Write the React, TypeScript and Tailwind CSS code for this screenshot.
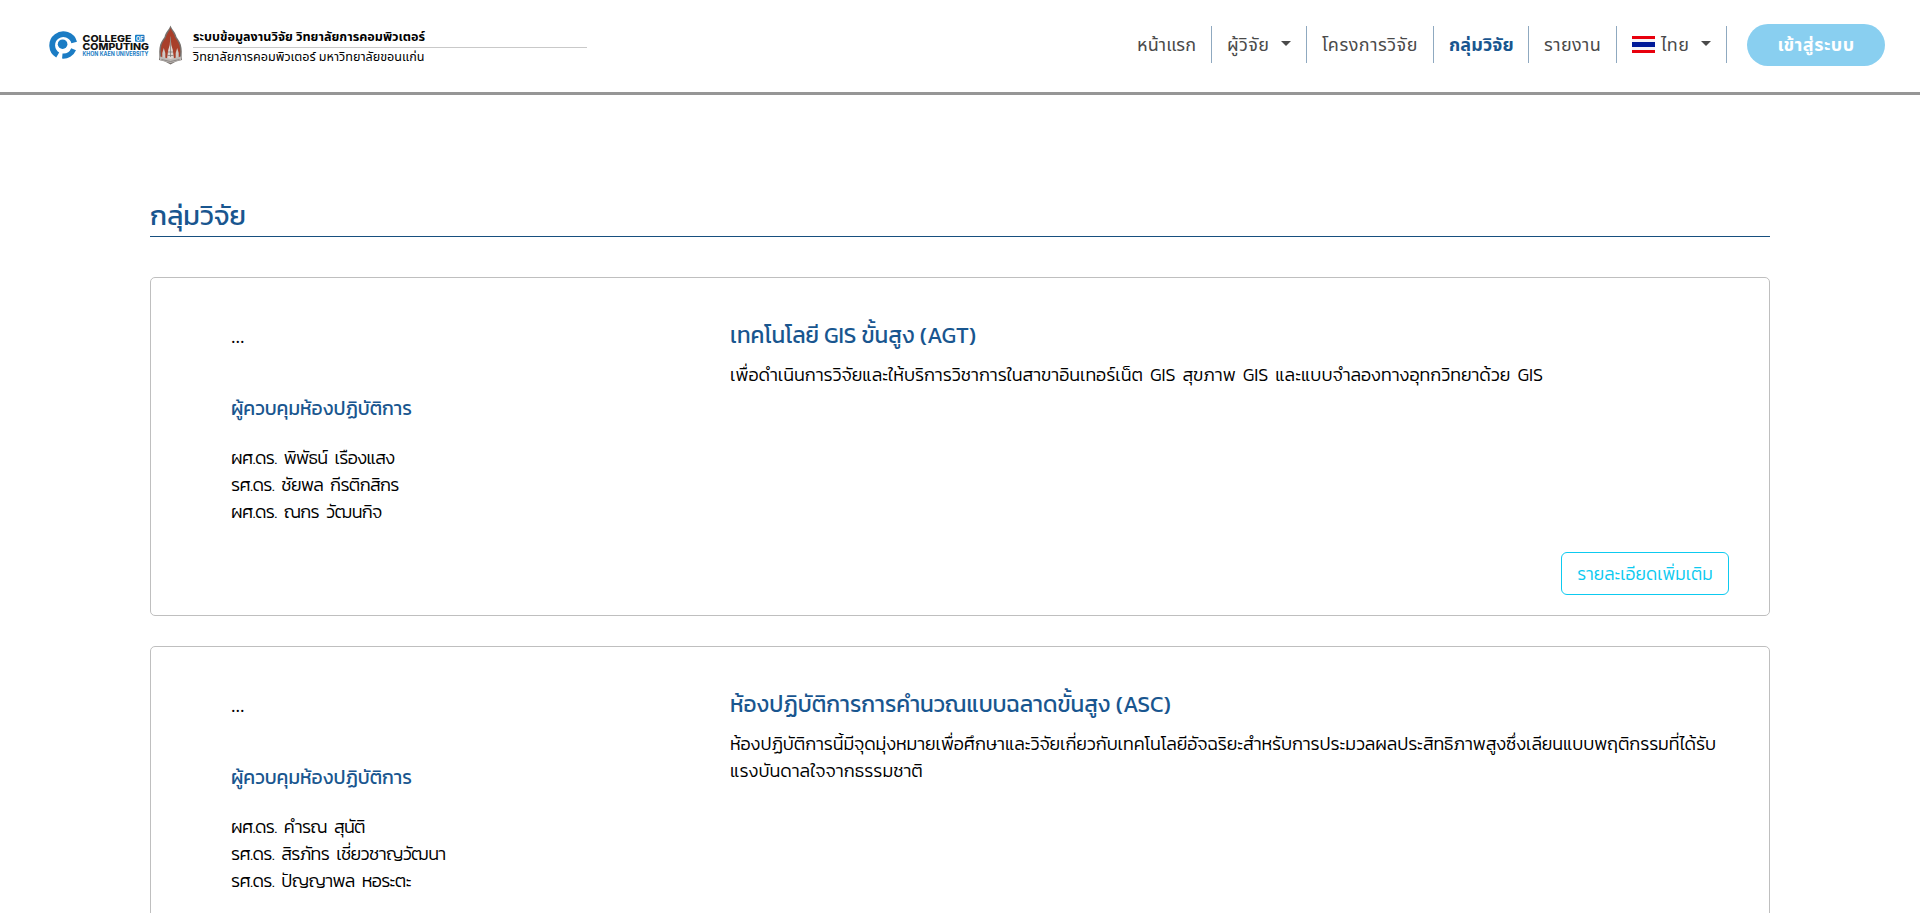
interface Group {
  title: string;
  lines: { text: string; cls: string }[];
  people: string[];
  action?: string;
}

const groups: Group[] = [
  {
    title: "เทคโนโลยี GIS ขั้นสูง (AGT)",
    lines: [{ text: "เพื่อดำเนินการวิจัยและให้บริการวิชาการในสาขาอินเทอร์เน็ต GIS สุขภาพ GIS และแบบจำลองทางอุทกวิทยาด้วย GIS", cls: "tracking-[-0.04px] [word-spacing:3px]" }],
    people: ["ผศ.ดร. พิพัธน์ เรืองแสง", "รศ.ดร. ชัยพล กีรติกสิกร", "ผศ.ดร. ณกร วัฒนกิจ"],
    action: "รายละเอียดเพิ่มเติม",
  },
  {
    title: "ห้องปฏิบัติการการคำนวณแบบฉลาดขั้นสูง (ASC)",
    lines: [
      { text: "ห้องปฏิบัติการนี้มีจุดมุ่งหมายเพื่อศึกษาและวิจัยเกี่ยวกับเทคโนโลยีอัจฉริยะสำหรับการประมวลผลประสิทธิภาพสูงซึ่งเลียนแบบพฤติกรรมที่ได้รับ", cls: "tracking-[-0.105px]" },
      { text: "แรงบันดาลใจจากธรรมชาติ", cls: "" },
    ],
    people: ["ผศ.ดร. คำรณ สุนัติ", "รศ.ดร. สิรภัทร เชี่ยวชาญวัฒนา", "รศ.ดร. ปัญญาพล หอระตะ"],
  },
];

function CollegeLogo() {
  return (
    <svg width="103" height="36" viewBox="0 0 103 36" className="-mr-px shrink-0">
      <path d="M26.200 12.400A11.200 11.200 0 1 0 9.700 25" fill="none" stroke="#1b7cc4" strokeWidth="5.800" />
      <path d="M14.300 26A11.200 11.200 0 0 0 25.600 19.200" fill="none" stroke="#1b7cc4" strokeWidth="5.200" />
      <circle cx="14.600" cy="14.200" r="4.800" fill="#1b7cc4" />
      <text x="34.500" y="11.500" textLength="49" lengthAdjust="spacingAndGlyphs" fontFamily="Inter, sans-serif" fontWeight="800" fontSize="9.200" fill="#111">COLLEGE</text>
      <rect x="87" y="4.800" width="9.500" height="7" rx="1" fill="#1b7cc4" />
      <text x="88" y="10.500" textLength="7.500" lengthAdjust="spacingAndGlyphs" fontFamily="Inter, sans-serif" fontWeight="700" fontSize="6" fill="#fff">OF</text>
      <text x="34.500" y="20" textLength="66.500" lengthAdjust="spacingAndGlyphs" fontFamily="Inter, sans-serif" fontWeight="800" fontSize="9.200" fill="#111">COMPUTING</text>
      <text x="34.500" y="26" textLength="66" lengthAdjust="spacingAndGlyphs" fontFamily="Inter, sans-serif" fontWeight="700" fontSize="5.500" fill="#1b7cc4">KHON KAEN UNIVERSITY</text>
    </svg>
  );
}

function Emblem() {
  return (
    <svg width="25" height="40" viewBox="0 0 25 40" className="shrink-0">
      <path d="M12.500 .5C14 5 17.500 7 18.500 12C20.500 15 23 18 23.500 23C24.300 28 23 31 24 35L18 36.500L12.500 39.500L7 36.500L1 35C2 31 .7 28 1.500 23C2 18 4.500 15 6.500 12C7.500 7 11 5 12.500 .5Z" fill="#77716d" />
      <path d="M12.500 3C13.800 6.500 16.500 9 17.400 13C19.700 16 21.800 19 22.100 24C22.600 28 21.500 30 22 33L3 33C3.500 30 2.400 28 2.900 24C3.200 19 5.300 16 7.600 13C8.500 9 11.200 6.500 12.500 3Z" fill="#a83f2a" />
      <path d="M12.500 11L13.300 20L14.800 25L16 34H9L10.200 25L11.700 20Z" fill="#ddd6d2" />
      <path d="M5.800 23L7.300 28V34H4.300V28ZM19.200 23L20.700 28V34H17.700V28Z" fill="#cfc8c4" />
      <path d="M2 31.500L12.500 34L23 31.500V35L12.500 38L2 35Z" fill="#bdb8b5" />
      <path d="M12.500 12V32M10 27H15M9.500 30.500H15.500M3.500 34.500L12.500 36.500L21.500 34.500" stroke="#77716e" strokeWidth=".7" fill="none" />
    </svg>
  );
}

function Caret() {
  return <span className="mb-[5px] border-x-[5.4px] border-t-[5.4px] border-x-transparent border-t-[#4a4a4a]" />;
}

function ThaiFlag() {
  return (
    <svg width="23" height="17" viewBox="0 0 23 17" shapeRendering="crispEdges" className="mb-0.5 shrink-0">
      <path d="M0 0h23v17H0z" fill="#f4f5f8" />
      <path d="M0 0h23v3H0zM0 14h23v3H0z" fill="#e8000d" />
      <path d="M0 6h23v5H0z" fill="#001a98" />
    </svg>
  );
}

function Header() {
  return (
    <header className="flex h-[95px] items-start justify-between border-b-[3px] border-[#969696] pr-[35px] font-['Noto_Sans_Thai','Noto_Sans',sans-serif]">
      <div className="flex pl-12">
        <div className="pt-[30px]"><CollegeLogo /></div>
        <div className="pt-[25px] pl-2"><Emblem /></div>
        <div className="ml-[10px] w-[394px] text-[12.6px] leading-[20px] whitespace-nowrap text-black">
          <div className="h-[48px] border-b border-[#c9c9c9] pt-7 font-bold">ระบบข้อมูลงานวิจัย วิทยาลัยการคอมพิวเตอร์</div>
          <div>วิทยาลัยการคอมพิวเตอร์ มหาวิทยาลัยขอนแก่น</div>
        </div>
      </div>
      <nav className="flex items-start pt-6 text-[18px] leading-[27px] whitespace-nowrap text-[#4a4a4a]">
        <div className="mt-0.5 flex h-[37px] w-[75px] items-center border-r border-[#8fa9c0] pt-0.5 tracking-[0.1px]">หน้าแรก</div>
        <div className="mt-0.5 flex h-[37px] w-[95px] items-center justify-between border-r border-[#8fa9c0] px-[15px] pt-0.5 tracking-[0.4px]">ผู้วิจัย<Caret /></div>
        <div className="mt-0.5 flex h-[37px] w-[127px] items-center border-r border-[#8fa9c0] pt-0.5 pl-[15px] tracking-[0.5px]">โครงการวิจัย</div>
        <div className="mt-0.5 flex h-[37px] w-[95px] items-center border-r border-[#8fa9c0] pt-0.5 pl-[15px] font-bold tracking-[0.1px] text-[#19568f]">กลุ่มวิจัย</div>
        <div className="mt-0.5 flex h-[37px] w-[88px] items-center border-r border-[#8fa9c0] pt-0.5 pl-[15px] tracking-[0.4px]">รายงาน</div>
        <div className="mt-0.5 flex h-[37px] w-[110px] items-center border-r border-[#8fa9c0] px-[15px] pt-0.5 tracking-[0.4px]">
          <ThaiFlag />
          <span className="ml-[6px] flex-1">ไทย</span>
          <Caret />
        </div>
        <button className="ml-5 flex h-[42px] w-[138px] items-center justify-center rounded-full bg-[#89cff0] font-bold tracking-[0.45px] text-white">เข้าสู่ระบบ</button>
      </nav>
    </header>
  );
}

export default function App() {
  return (
    <div className="h-[913px] overflow-hidden bg-white">
      <Header />
      <main className="mx-auto w-[1620px] font-['Kanit','Noto_Sans_Thai','Noto_Sans',sans-serif]">
        <h1 className="mt-[99px] h-[43px] border-b border-[#174f7f] text-[27.6px] leading-[43px] text-[#19568f]">กลุ่มวิจัย</h1>
        <div className="mt-10 flex flex-col gap-[30px]">
          {groups.map((g) => (
            <section key={g.title} className="flex h-[339px] rounded-[5px] border border-[#bfbfbf] pr-10 pl-20 text-[18px] leading-[27px] font-light text-black">
              <div className="w-[499px] pt-[45px]">
                <p className="font-['Noto_Sans',sans-serif] text-[17px] font-normal">...</p>
                <h2 className="mt-[45px] text-[19.2px] leading-[28px] font-normal text-[#19568f]">ผู้ควบคุมห้องปฏิบัติการ</h2>
                <div className="mt-[21px] tracking-[-0.65px] [word-spacing:3.5px]">
                  {g.people.map((p) => <p key={p}>{p}</p>)}
                </div>
              </div>
              <div className="flex flex-1 flex-col pt-11 pb-5">
                <h2 className="text-[22.5px] leading-[27px] font-normal text-[#19568f]">{g.title}</h2>
                <div className="mt-[12px] whitespace-nowrap">
                  {g.lines.map((l) => <p key={l.text} className={l.cls}>{l.text}</p>)}
                </div>
                {g.action && (
                  <button className="mt-auto h-[43px] w-[168px] self-end rounded-[6px] border border-[#0dcaf0] pt-px text-[17.6px] text-[#0dcaf0]">{g.action}</button>
                )}
              </div>
            </section>
          ))}
        </div>
      </main>
    </div>
  );
}
